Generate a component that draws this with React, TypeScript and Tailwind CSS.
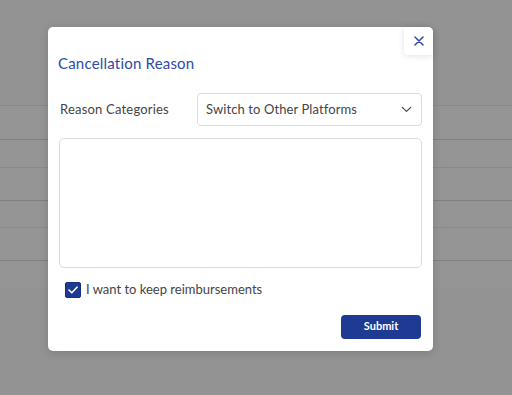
const rows = ['h-[34px]', 'h-[28px]', 'h-[33px]', 'h-[27px]', 'h-[33px]', 'h-[27px]'];

const App = () => {
  return (
    <div className="relative h-[395px] w-[512px] overflow-hidden bg-[#939393] font-['Lato',sans-serif]">
      <div className="pt-[105px]">
        {rows.map((h, i) => (
          <div
            key={i}
            className={`${h} border-t ${i % 2 === 0 ? 'border-[#8a8a8a]' : 'border-[#7f7f7f]'} bg-[#959595]`}
          />
        ))}
      </div>

      <div className="absolute left-[48px] top-[27px] h-[324px] w-[385px] rounded-[5px] bg-white shadow-[0_2px_10px_rgba(0,0,0,0.15)]">
        <button className="absolute right-0 top-0 flex h-[28px] w-[29px] items-center justify-center rounded-bl-[4px] rounded-tr-[5px] bg-white shadow-[0_1px_6px_rgba(0,0,0,0.12)]">
          <svg width="10" height="10" viewBox="0 0 10 10" fill="none" stroke="#2b45a6" strokeWidth="1.5" strokeLinecap="round">
            <path d="M1 1L9 9M9 1L1 9" />
          </svg>
        </button>

        <div className="px-[10px] pt-[26px]">
          <h2 className="text-[15px] leading-[20px] tracking-[0.2px] text-[#2d4aa8]">Cancellation Reason</h2>

          <div className="mt-[20px] flex items-center pl-[2px] pr-[1px]">
            <label className="w-[137px] text-[13px] tracking-[0.2px] text-[#444]">Reason Categories</label>
            <div className="flex h-[33px] flex-1 items-center justify-between rounded-[4px] border border-[#dcdcdc] pl-[8px] pr-[9px]">
              <span className="text-[13px] tracking-[0.1px] text-[#444]">Switch to Other Platforms</span>
              <svg width="11" height="7" viewBox="0 0 11 7" fill="none" stroke="#555" strokeWidth="1.2">
                <path d="M1 1l4.5 4.5L10 1" />
              </svg>
            </div>
          </div>

          <textarea className="mt-[12px] ml-[1px] block h-[130px] w-[363px] resize-none rounded-[5px] border border-[#dcdcdc] outline-none" />

          <div className="mt-[12px] flex items-center pl-[7px]">
            <span className="flex h-[16px] w-[16px] items-center justify-center rounded-[2px] border border-[#16307f] bg-[#1f3a93]">
              <svg width="10" height="8" viewBox="0 0 10 8" fill="none" stroke="white" strokeWidth="1.6" strokeLinecap="round" strokeLinejoin="round">
                <path d="M1 4l2.8 2.8L9 1.2" />
              </svg>
            </span>
            <span className="ml-[5px] text-[13px] text-[#444]">I want to keep reimbursements</span>
          </div>

          <div className="mt-[15px] flex justify-end pr-[2px]">
            <button className="h-[24px] w-[80px] rounded-[4px] bg-[#1f3a93] text-[11px] font-bold text-white">Submit</button>
          </div>
        </div>
      </div>
    </div>
  );
};

export default App;
